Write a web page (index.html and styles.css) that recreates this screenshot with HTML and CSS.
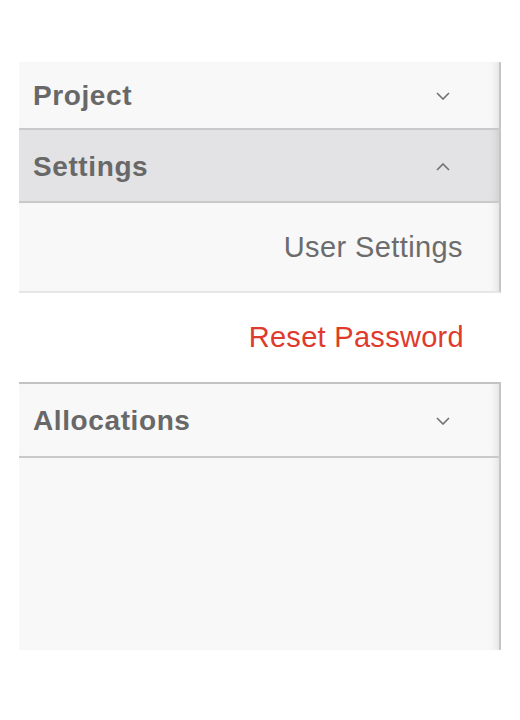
FILE: index.html
```html
<!DOCTYPE html>
<html lang="en">
<head>
<meta charset="utf-8">
<title>Menu</title>
<link rel="stylesheet" href="styles.css">
</head>
<body>
<div class="page">
  <nav class="panel">
    <div class="section">
      <div class="header">
        <span class="title">Project</span>
        <svg class="chev" width="14" height="8" viewBox="0 0 14 8"><polyline points="1,1 7,7 13,1" fill="none" stroke="#707070" stroke-width="1.6"/></svg>
      </div>
    </div>
    <div class="section open">
      <div class="header active">
        <span class="title">Settings</span>
        <svg class="chev" width="14" height="8" viewBox="0 0 14 8"><polyline points="1,7 7,1 13,7" fill="none" stroke="#707070" stroke-width="1.6"/></svg>
      </div>
      <div class="item">User Settings</div>
      <a class="item link">Reset Password</a>
    </div>
    <div class="section last">
      <div class="header">
        <span class="title">Allocations</span>
        <svg class="chev" width="14" height="8" viewBox="0 0 14 8"><polyline points="1,1 7,7 13,1" fill="none" stroke="#707070" stroke-width="1.6"/></svg>
      </div>
      <div class="body"></div>
    </div>
  </nav>
</div>
</body>
</html>
```
FILE: styles.css
```css
* { box-sizing: border-box; }
html, body { margin: 0; padding: 0; background: #ffffff; }
body { font-family: "Liberation Sans", Arial, sans-serif; }
.page { padding: 62px 0 0 19px; }
.panel { width: 482px; display: flex; flex-direction: column; }
.section { display: flex; flex-direction: column; }
.header {
  display: flex; align-items: center; justify-content: space-between;
  height: 68px; padding: 2px 49px 0 14px;
  background: #f8f8f8;
  border-right: 2px solid #c6c6c6;
  border-bottom: 2px solid #c9c9c9;
  box-shadow: inset -9px 0 8px -7px rgba(0,0,0,0.10);
}
.header.active { background: #e3e3e5; height: 73px; }
.last .header { height: 76px; border-top: 2px solid #c3c3c3; }
.title { font-size: 28px; font-weight: bold; color: #686868; letter-spacing: 0.6px; }
.chev { display: block; }
.item {
  display: flex; align-items: center; justify-content: flex-end;
  height: 90px; padding: 0 36px 0 14px;
  font-size: 29px; color: #6c6c6c; letter-spacing: 0.4px;
  background: #f8f8f8;
  border-right: 2px solid #c6c6c6;
  border-bottom: 2px solid #e6e6e6;
  box-shadow: inset -9px 0 8px -7px rgba(0,0,0,0.10);
}
.item.link {
  height: 89px; background: #ffffff; color: #de3b2c;
  border-right: none; border-bottom: none; box-shadow: none;
  padding-right: 37px; letter-spacing: 0.3px;
}
.body {
  height: 192px; background: #f8f8f8;
  border-right: 2px solid #c6c6c6;
  box-shadow: inset -9px 0 8px -7px rgba(0,0,0,0.10);
}
```
